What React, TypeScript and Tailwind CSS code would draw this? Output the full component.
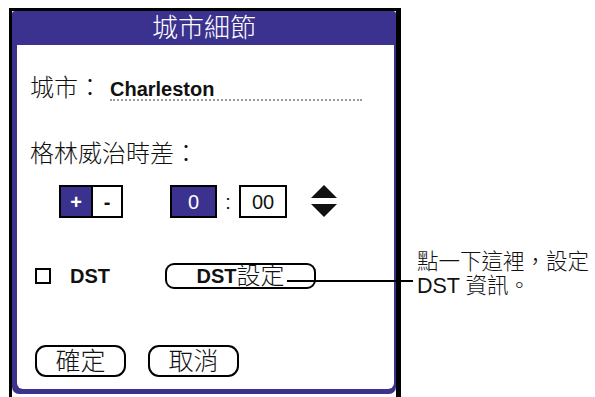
import React from 'react';

const cjk = '"Liberation Sans", "Noto Sans CJK TC", sans-serif';

const PalmButton: React.FC<{ label: string; className?: string }> = ({ label, className }) => (
  <div
    className={`h-[32px] w-[91px] rounded-[11px] border-2 border-black flex items-center justify-center text-[25px] leading-none font-light text-[#111] ${className ?? ''}`}
  >
    {label}
  </div>
);

export default function App() {
  return (
    <div
      className="relative w-[595px] h-[397px] overflow-hidden bg-white flex items-start"
      style={{ fontFamily: cjk }}
    >
      {/* Dialog frame */}
      <div className="ml-[9px] mt-[8px] w-[392px] h-[389px] shrink-0 border-t-[3px] border-l-[3px] border-r-[5px] border-black">
        <div className="h-[383px] bg-[#3b318f] rounded-t-[3px] rounded-b-[7px] flex flex-col">
          {/* Title */}
          <div className="h-[34px] flex items-center justify-center text-white text-[26px] leading-none font-light">
            城市細節
          </div>

          {/* Body */}
          <div className="flex-1 ml-[5px] mr-[2px] mb-[5px] bg-white rounded-b-[6px] pl-[13px] flex flex-col text-[#111]">
            {/* City */}
            <div className="mt-[31px] h-[30px] flex items-baseline">
              <span className="text-[24px] leading-[24px] font-light">城市：</span>
              <div className="ml-[8px] w-[252px] border-b-2 border-dotted border-[#9a9a9a] text-[20px] leading-[20px] font-bold">
                Charleston
              </div>
            </div>

            {/* GMT offset */}
            <div className="mt-[36px] h-[24px] text-[24px] leading-[24px] font-light">格林威治時差：</div>

            <div className="mt-[19px] h-[33px] ml-[29px] flex items-center">
              <div className="w-[64px] h-[33px] shrink-0 border-2 border-black flex">
                <div className="w-[30px] bg-[#3b318f] text-white flex items-center justify-center text-[20px] font-bold leading-none">
                  +
                </div>
                <div className="flex-1 border-l-2 border-black flex items-center justify-center text-[20px] font-bold leading-none">
                  -
                </div>
              </div>

              <div className="ml-[47px] w-[47px] h-[33px] shrink-0 border-2 border-black bg-[#3b318f] text-white flex items-center justify-center text-[20px] leading-none">
                0
              </div>
              <div className="w-[22px] flex items-center justify-center text-[20px] leading-none">:</div>
              <div className="w-[48px] h-[33px] shrink-0 border-2 border-black flex items-center justify-center text-[20px] leading-none">
                00
              </div>

              <svg className="ml-[24px] shrink-0" width="26" height="33" viewBox="0 0 26 33">
                <polygon points="13,0 26,13 0,13" fill="#111" />
                <polygon points="0,19 26,19 13,32" fill="#111" />
              </svg>
            </div>

            {/* DST */}
            <div className="mt-[45px] h-[26px] ml-[5px] flex items-center">
              <div className="w-[130px] shrink-0 flex items-center">
                <div className="w-[16px] h-[16px] shrink-0 border-2 border-black" />
                <span className="ml-[19px] text-[20px] font-bold leading-none">DST</span>
              </div>
              <div className="w-[151px] h-[26px] shrink-0 rounded-[9px] border-2 border-black flex items-center justify-center leading-none">
                <span className="text-[20px] font-bold">DST</span>
                <span className="text-[24px] font-light">設定</span>
              </div>
            </div>

            {/* Buttons */}
            <div className="mt-[56px] ml-[5px] flex gap-[22px]">
              <PalmButton label="確定" />
              <PalmButton label="取消" />
            </div>
          </div>
        </div>
      </div>

      {/* Callout text */}
      <div className="ml-[16px] mt-[250px] text-[21.5px] leading-[24px] font-light text-[#111] whitespace-nowrap">
        <div>點一下這裡，設定</div>
        <div>DST 資訊。</div>
      </div>

      {/* Callout line */}
      <div className="absolute left-[287px] top-[280px] w-[126px] h-[2px] bg-black" />
    </div>
  );
}
